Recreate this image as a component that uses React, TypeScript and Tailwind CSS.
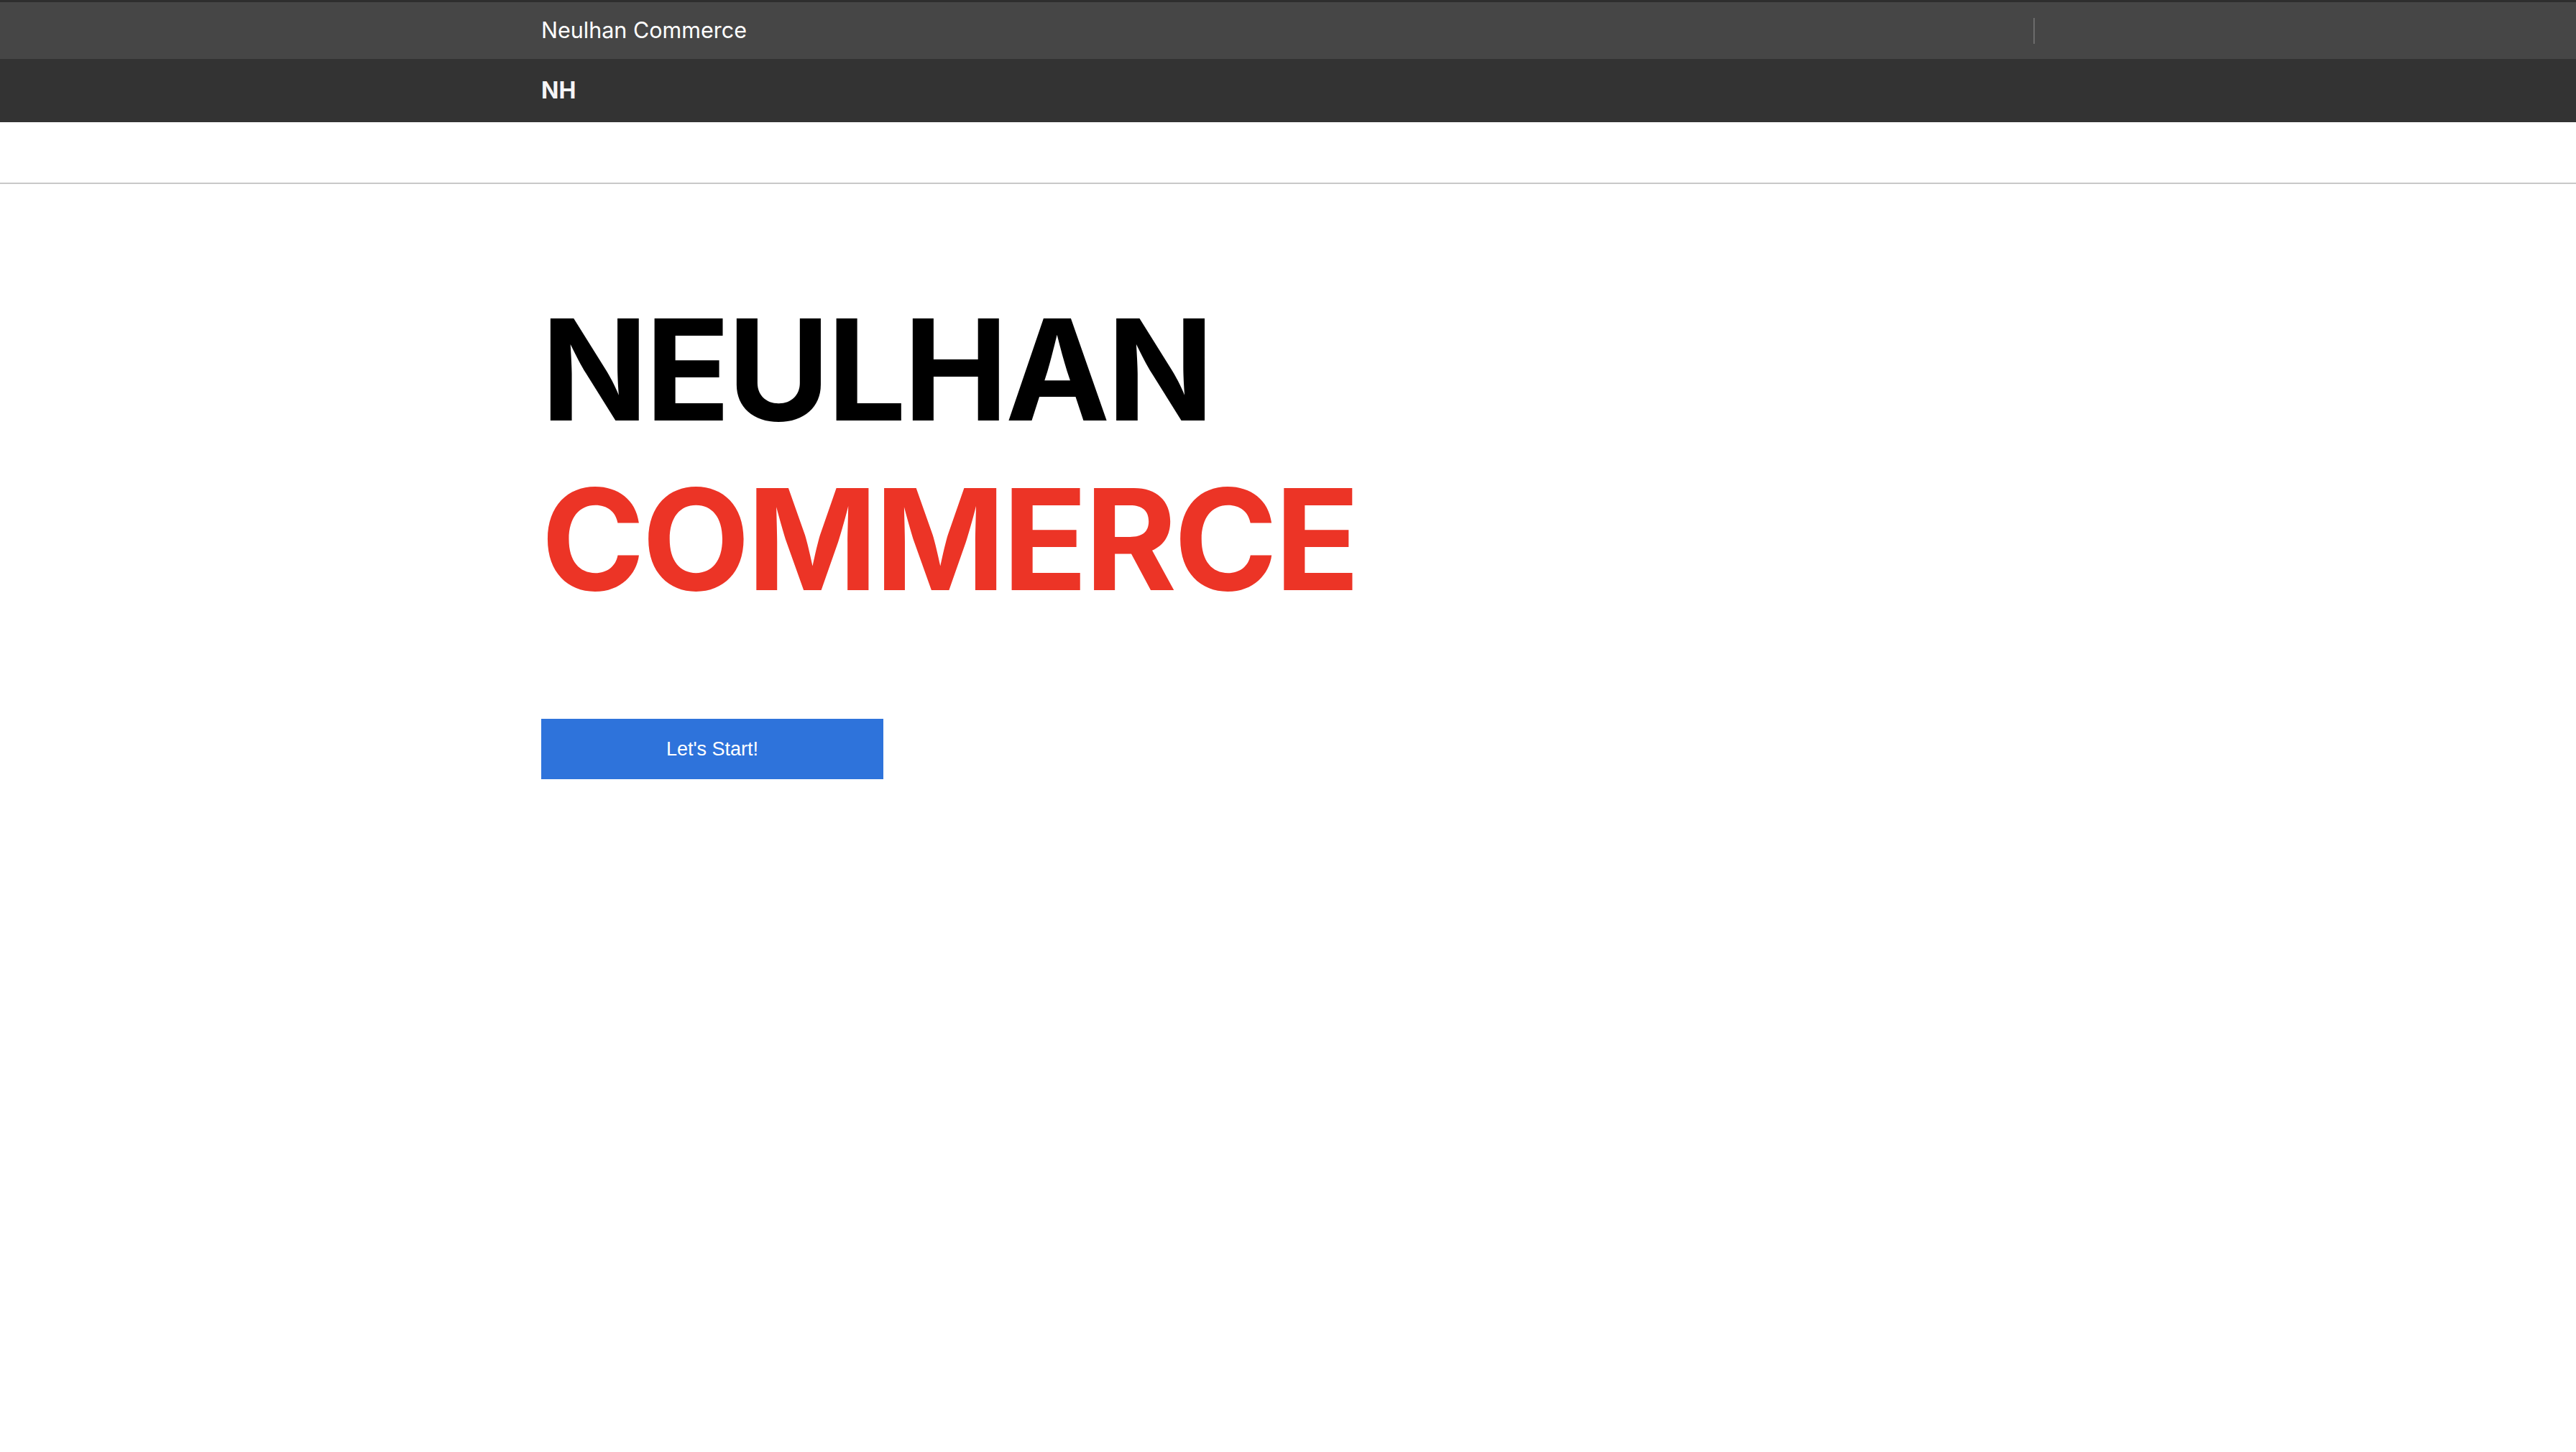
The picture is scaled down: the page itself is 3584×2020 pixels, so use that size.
import React from "react";

export default function App() {
  return (
    <div className="min-h-screen w-full bg-white" style={{ fontFamily: "Inter, 'Noto Sans', sans-serif" }}>
      <div className="border-t-[3px] border-[#2e2e2e] bg-[#464646]">
        <div className="mx-auto flex h-[79px] w-[2078px] items-center justify-between">
          <span className="text-[30.5px] leading-none text-white">Neulhan Commerce</span>
          <span className="h-[36px] w-[2px] bg-[#6b6b6b]" />
        </div>
      </div>
      <div className="bg-[#333333]">
        <div className="mx-auto flex h-[88px] w-[2078px] items-center">
          <span className="text-[32px] font-bold leading-none text-[#f5f5f7]">NH</span>
        </div>
      </div>
      <div className="h-[86px] border-b-2 border-[#c8c8c8]" />
      <main className="mx-auto w-[2078px] pt-[140px]">
        <h1 className="text-[195px] font-bold leading-[236px] tracking-[-4px]">
          <span className="block text-black">NEULHAN</span>
          <span className="block text-[#ec3426]">COMMERCE</span>
        </h1>
        <button
          className="mt-[132px] flex h-[84px] w-[476px] items-center justify-center bg-[#2e73db] text-[27px] text-white"
          style={{ fontFamily: "'Liberation Sans', Arial, sans-serif" }}
        >
          Let's Start!
        </button>
      </main>
    </div>
  );
}
